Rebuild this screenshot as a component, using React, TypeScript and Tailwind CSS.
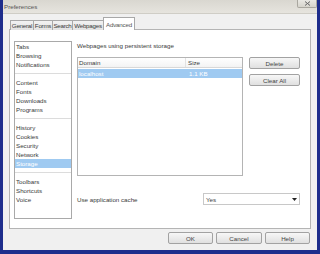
import React from "react";

const Sep = () => (
  <div className="h-[9px] flex items-center">
    <div className="h-px w-full bg-[#dcdcdc]" />
  </div>
);

function Item({ label, selected }: { label: string; selected?: boolean }) {
  return (
    <div
      className={
        "h-[9px] leading-[9px] pl-[1px] whitespace-nowrap " +
        (selected ? "bg-[#9fcaf1] text-white" : "text-[#3a3a3a]")
      }
    >
      {label}
    </div>
  );
}

function Btn({ label, w }: { label: string; w: string }) {
  return (
    <div
      className={
        "h-[12px] flex items-center justify-center rounded-[2px] border border-[#a2a2a2] bg-gradient-to-b from-[#f7f7f7] to-[#e0e0e0] text-[#444] " +
        w
      }
    >
      {label}
    </div>
  );
}

export default function App() {
  const tabs = [
    { l: "General", w: "w-[24px]" },
    { l: "Forms", w: "w-[20px]" },
    { l: "Search", w: "w-[21px]" },
    { l: "Webpages", w: "w-[32px]" },
  ];
  return (
    <div className="w-[320px] h-[254px] bg-[#1e2d8c] pl-[3px] pr-[4px] pb-[4px] flex font-['Liberation_Sans',Arial,sans-serif] text-[6.2px] leading-[9px] overflow-hidden">
      <div className="flex-1 flex flex-col bg-[#f0f0f0]">
        {/* title bar */}
        <div className="h-[14px] flex items-start justify-between bg-gradient-to-b from-[#d9d7d0] to-[#e6e4de] border-b border-[#cfcdc6]">
          <div className="pl-[1px] pt-[2px] text-[#555] leading-[9px]">Preferences</div>
          <div className="w-[20px] h-[8px] border border-[#a9a79f] border-t-0 rounded-b-[2px] bg-gradient-to-b from-[#e9e8e3] to-[#d6d4cc] flex items-center justify-center">
            <svg width="7" height="5" viewBox="0 0 7 5">
              <path d="M1 0.5 L6 4.5 M6 0.5 L1 4.5" stroke="#666" strokeWidth="1" />
            </svg>
          </div>
        </div>
        {/* tabs */}
        <div className="mx-[6px] pt-[3px] flex items-end pl-[1px] h-[16px] relative z-10 -mb-px">
          {tabs.map((t) => (
            <div
              key={t.l}
              className={
                "h-[10px] border border-b-0 border-[#a8a8a8] bg-gradient-to-b from-[#f2f2f2] to-[#e3e3e3] text-[#3a3a3a] flex items-center justify-center whitespace-nowrap tracking-[-0.25px] -mr-px " +
                t.w
              }
            >
              {t.l}
            </div>
          ))}
          <div className="h-[13px] w-[32px] border border-b-0 border-[#a8a8a8] bg-white text-[#555] flex items-center justify-center whitespace-nowrap tracking-[-0.2px]">
            Advanced
          </div>
        </div>
        {/* panel */}
        <div className="mx-[6px] h-[200px] border border-[#b4b4b4] bg-white flex pl-[4px] pt-[11px] pr-[10px]">
          <div className="w-[58px] h-[178px] border border-[#a9a9a9] flex flex-col">
            <Item label="Tabs" />
            <Item label="Browsing" />
            <Item label="Notifications" />
            <Sep />
            <Item label="Content" />
            <Item label="Fonts" />
            <Item label="Downloads" />
            <Item label="Programs" />
            <Sep />
            <Item label="History" />
            <Item label="Cookies" />
            <Item label="Security" />
            <Item label="Network" />
            <Item label="Storage" selected />
            <Sep />
            <Item label="Toolbars" />
            <Item label="Shortcuts" />
            <Item label="Voice" />
          </div>
          <div className="ml-[5px] flex-1 flex flex-col">
            <div className="h-[9px] text-[#3a3a3a] whitespace-nowrap">Webpages using persistent storage</div>
            <div className="mt-[7px] flex">
              <div className="w-[166px] h-[119px] border border-[#b4b4b4] flex flex-col">
                <div className="h-[10px] flex border-b border-[#d8d8d8] bg-gradient-to-b from-[#ffffff] to-[#f3f3f3] text-[#3a3a3a]">
                  <div className="w-[108px] pl-[1px] border-r border-[#e2e2e2]">Domain</div>
                  <div className="pl-[2px]">Size</div>
                </div>
                <div className="mt-px h-[9px] flex bg-[#9fcaf1] text-white">
                  <div className="w-[108px] pl-[1px]">localhost</div>
                  <div className="pl-[3px]">1.1 KB</div>
                </div>
              </div>
              <div className="ml-[6px] flex flex-col gap-[5px]">
                <Btn label="Delete" w="w-[51px]" />
                <Btn label="Clear All" w="w-[51px]" />
              </div>
            </div>
            <div className="mt-[17px] flex items-center justify-between">
              <div className="text-[#3a3a3a] whitespace-nowrap">Use application cache</div>
              <div className="w-[97px] h-[12px] border border-[#c8c8c8] bg-white flex items-center justify-between pl-[2px] pr-[2px] text-[#3a3a3a]">
                <span>Yes</span>
                <svg width="5" height="3" viewBox="0 0 5 3">
                  <path d="M0 0 L5 0 L2.5 3 Z" fill="#222" />
                </svg>
              </div>
            </div>
          </div>
        </div>
        {/* footer */}
        <div className="flex justify-end pr-[7px] pt-[3px] gap-[3px]">
          <Btn label="OK" w="w-[45px]" />
          <Btn label="Cancel" w="w-[46px]" />
          <Btn label="Help" w="w-[45px]" />
        </div>
      </div>
    </div>
  );
}
